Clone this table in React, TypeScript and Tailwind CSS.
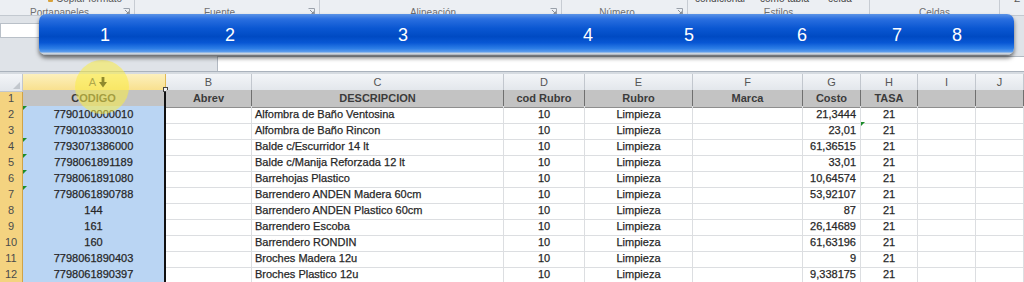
import React from "react";

type Row = [string, string, string, string, string, string, string, string];

const rows: Row[] = [
  ["7790100000010", "", "Alfombra de Baño Ventosina", "10", "Limpieza", "", "21,3444", "21"],
  ["7790103330010", "", "Alfombra de Baño Rincon", "10", "Limpieza", "", "23,01", "21"],
  ["7793071386000", "", "Balde c/Escurridor 14 lt", "10", "Limpieza", "", "61,36515", "21"],
  ["7798061891189", "", "Balde c/Manija Reforzada 12 lt", "10", "Limpieza", "", "33,01", "21"],
  ["7798061891080", "", "Barrehojas Plastico", "10", "Limpieza", "", "10,64574", "21"],
  ["7798061890788", "", "Barrendero ANDEN Madera 60cm", "10", "Limpieza", "", "53,92107", "21"],
  ["144", "", "Barrendero ANDEN Plastico 60cm", "10", "Limpieza", "", "87", "21"],
  ["161", "", "Barrendero Escoba", "10", "Limpieza", "", "26,14689", "21"],
  ["160", "", "Barrendero RONDIN", "10", "Limpieza", "", "61,63196", "21"],
  ["7798061890403", "", "Broches Madera 12u", "10", "Limpieza", "", "9", "21"],
  ["7798061890397", "", "Broches Plastico 12u", "10", "Limpieza", "", "9,338175", "21"],
];

const headers = ["CODIGO", "Abrev", "DESCRIPCION", "cod Rubro", "Rubro", "Marca", "Costo", "TASA", "", ""];
const letters = ["A", "B", "C", "D", "E", "F", "G", "H", "I", "J"];
const align = [
  "justify-center",
  "justify-start pl-[3px]",
  "justify-start pl-[3px]",
  "justify-center",
  "justify-center",
  "justify-start pl-[3px]",
  "justify-end pr-[4px]",
  "justify-center",
  "justify-center",
  "justify-center",
];

const gridCols =
  "grid grid-cols-[23px_143px_86px_252px_81px_108px_110px_58px_57px_58px_48px]";

const greenMarks = new Set(["0-2", "0-4", "0-5", "0-6", "0-7", "7-3"]);

function Launcher() {
  return (
    <svg width="7" height="7" viewBox="0 0 7 7" className="block">
      <path d="M0.5 0.5H6.5V6.5" fill="none" stroke="#9aa1aa" strokeWidth="1" />
      <path d="M2 2L5.5 5.5M5.5 3.5V5.5H3.5" fill="none" stroke="#8a9099" strokeWidth="1" />
    </svg>
  );
}

function Group({
  className,
  label,
  launcher,
  top,
}: {
  className: string;
  label: string;
  launcher?: boolean;
  top?: React.ReactNode;
}) {
  return (
    <div className={`flex flex-col justify-between h-[15px] border-r border-[#c7ccd3] ${className}`}>
      <div className="-mt-[7px] h-[12px] leading-[12px] flex items-center">{top}</div>
      <div className="-mb-[4px] h-[12px] leading-[12px] flex items-center">
        <span className="flex-1 text-center">{label}</span>
        {launcher && (
          <span className="w-[15px] flex justify-center -mt-[4px]">
            <Launcher />
          </span>
        )}
      </div>
    </div>
  );
}

export default function App() {
  return (
    <div className="relative w-[1024px] h-[282px] overflow-hidden bg-white font-['Liberation_Sans',Arial,sans-serif] text-[11px] text-[#262626]">
      {/* Ribbon */}
      <div className="flex h-[15px] overflow-hidden bg-[#eceff3] text-[10px] text-[#707070]">
        <Group
          className="w-[135px]"
          label="Portapapeles"
          launcher
          top={
            <div className="flex items-center pl-[48px] gap-[3px]">
              <span className="w-[5px] h-[5px] bg-[#d9a23a] rounded-[1px]" />
              <span className="text-[#555]">Copiar formato</span>
            </div>
          }
        />
        <Group className="w-[185px]" label="Fuente" launcher />
        <Group className="w-[242px]" label="Alineación" launcher />
        <Group className="w-[126px]" label="Número" launcher />
        <Group
          className="w-[182px]"
          label="Estilos"
          top={
            <div className="flex pl-[7px] text-[#444]">
              <span>condicional</span>
              <span className="ml-[15px]">como tabla</span>
              <span className="ml-[19px]">celda</span>
            </div>
          }
        />
        <Group className="w-[130px]" label="Celdas" />
        <Group
          className="flex-1 border-r-0"
          label=""
          top={<span className="pl-[14px] text-[#555]">Σ</span>}
        />
      </div>

      {/* Formula bar area */}
      <div className="h-[59px] bg-[#dfe3e8] border-t border-[#c3c9d0] flex flex-col">
        <div className="h-[7px]" />
        <div className="h-[15px] flex">
          <div className="w-[90px] bg-white border border-[#b9c0c8]" />
        </div>
        <div className="h-[18px]" />
        <div className="h-[15px] flex">
          <div className="w-[217px]" />
          <div className="flex-1 bg-white border-l border-t border-[#b2b9c2]" />
        </div>
        <div className="flex-1 bg-[#d6dbe1] border-t border-[#aab2bc]" />
      </div>

      {/* Column headers */}
      <div className={`${gridCols} h-[16px] text-[#555]`}>
        <div className="relative bg-[linear-gradient(to_bottom,#f3f5f8,#e2e6eb)] border-r border-b border-[#c2c7ce] flex items-end justify-end p-[2px]">
          <svg width="7" height="7" viewBox="0 0 7 7">
            <path d="M7 0L7 7L0 7Z" fill="#c2c7cd" />
          </svg>
        </div>
        {letters.map((l, i) => (
          <div
            key={l}
            className={`relative flex items-center justify-center border-r border-b ${
              i === 0
                ? "bg-[linear-gradient(to_bottom,#fcf0bd,#f8df8c)] border-[#e1b955]"
                : "bg-[linear-gradient(to_bottom,#f3f5f8,#e2e6eb)] border-[#c2c7ce]"
            }`}
          >
            <span className={i === 0 ? "-ml-[3px]" : ""}>{l}</span>
            {i === 0 && (
              <svg width="8" height="11" viewBox="0 0 8 11" className="absolute left-[76px] top-[3px]">
                <path d="M2.6 0H5.4V5H8L4 10.5L0 5H2.6Z" fill="#111" />
              </svg>
            )}
          </div>
        ))}
      </div>

      <div className="[-webkit-text-stroke:0.25px_#2a2a2a]">
        {/* Row 1 (headers) */}
        <div className={`${gridCols} h-[16px]`}>
          <div className="flex items-center justify-center bg-[#f4d380] border-r border-b border-r-[#d0a347] border-b-[#e1bc63] text-[#4b4b4b] [-webkit-text-stroke:0]">
            1
          </div>
          {headers.map((h, i) => (
            <div
              key={i}
              className={`relative flex items-center justify-center bg-[#c3c3c3] border-b border-b-[#8e8e8e] font-bold text-[#3b3b3b] [-webkit-text-stroke:0] ${
                i === 0 ? "border-r-2 border-r-[#111]" : "border-r border-r-[#6f6f6f]"
              }`}
            >
              {h}
              {i === 0 && (
                <span className="absolute -right-[4px] -top-[3px] w-[5px] h-[5px] border border-[#444] bg-[#f4f4f4]" />
              )}
            </div>
          ))}
        </div>

        {/* Data rows */}
        {rows.map((r, ri) => {
          const rowNum = ri + 2;
          const cells = [...r, "", ""];
          return (
            <div key={rowNum} className={`${gridCols} h-[16px]`}>
              <div className="flex items-center justify-center bg-[#f4d380] border-r border-b border-r-[#d0a347] border-b-[#e1bc63] text-[#4b4b4b] [-webkit-text-stroke:0]">
                {rowNum}
              </div>
              {cells.map((c, ci) => (
                <div
                  key={ci}
                  className={`relative flex items-center whitespace-nowrap overflow-hidden ${align[ci]} ${
                    ci === 0
                      ? "bg-[#bad5f3] border-b border-b-[#a9c6ea] border-r-2 border-r-[#111]"
                      : "border-r border-b border-[#dcdee1]"
                  }`}
                >
                  {c}
                  {greenMarks.has(`${ci}-${rowNum}`) && (
                    <span className="absolute left-0 top-0 w-0 h-0 border-t-[4px] border-t-[#1c8c2a] border-r-[4px] border-r-transparent" />
                  )}
                </div>
              ))}
            </div>
          );
        })}
      </div>

      {/* Yellow cursor highlight */}
      <div className="absolute left-[75px] top-[60px] w-[54px] h-[54px] rounded-full bg-[rgba(250,236,70,0.55)] pointer-events-none" />

      {/* Blue callout bar */}
      <div className="absolute left-[39px] top-[14px] w-[975px] h-[41px] rounded-[7px] bg-[linear-gradient(to_bottom,#5b93e6_0%,#2a6fe0_12%,#0a57d2_35%,#004ac3_55%,#0857d4_70%,#2c7de6_84%,#5a9bec_92%,#cfd8e2_96%,#a2aab4_100%)] shadow-[0_3px_4px_rgba(0,0,0,0.55)] flex items-center text-white text-[18px] leading-none">
        <span className="w-[20px] text-center ml-[56px]">1</span>
        <span className="w-[20px] text-center ml-[105px]">2</span>
        <span className="w-[20px] text-center ml-[153px]">3</span>
        <span className="w-[20px] text-center ml-[165px]">4</span>
        <span className="w-[20px] text-center ml-[81px]">5</span>
        <span className="w-[20px] text-center ml-[93px]">6</span>
        <span className="w-[20px] text-center ml-[75px]">7</span>
        <span className="w-[20px] text-center ml-[40px]">8</span>
      </div>
    </div>
  );
}
